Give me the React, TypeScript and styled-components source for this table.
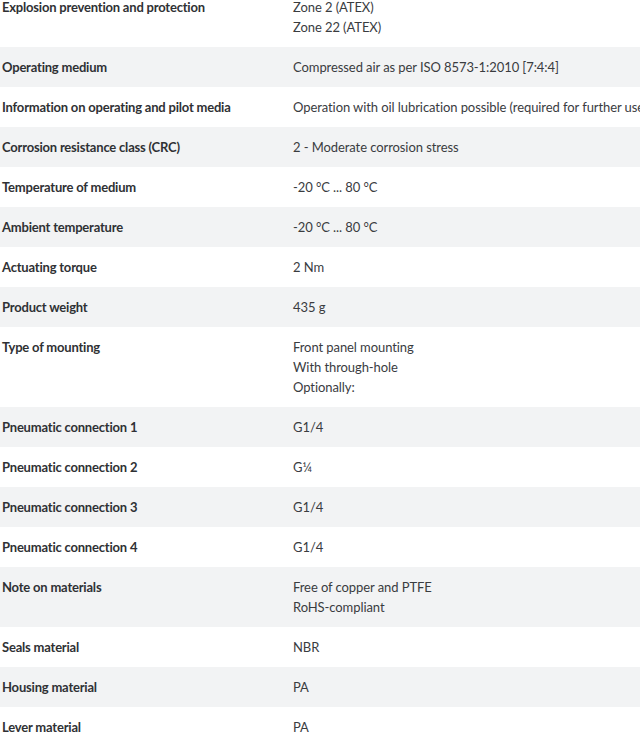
import React from "react";
import styled, { createGlobalStyle } from "styled-components";

const Global = createGlobalStyle`
  html, body { margin: 0; padding: 0; background: #ffffff; overflow: hidden; }
  body { font-family: Lato, "Open Sans", sans-serif; color: #333333; }
`;

const Page = styled.div`
  width: 640px;
  height: 733px;
  overflow: hidden;
`;

const Table = styled.div`
  margin-top: -13px;
  width: 760px;
  display: flex;
  flex-direction: column;
`;

const Row = styled.div<{ $shade: boolean }>`
  display: grid;
  grid-template-columns: 291px 1fr;
  padding: 10px 0 10px 2px;
  background: ${(p) => (p.$shade ? "#f2f3f4" : "#ffffff")};
`;

const Label = styled.div`
  font-size: 13px;
  line-height: 20px;
  font-weight: 700;
  letter-spacing: -0.2px;
  color: #2f3134;
  white-space: nowrap;
`;

const Values = styled.div`
  display: flex;
  flex-direction: column;
`;

const Value = styled.div`
  font-size: 13px;
  line-height: 20px;
  letter-spacing: -0.08px;
  color: #3a3c3f;
  white-space: nowrap;
`;

const rows: [string, string[]][] = [
  ["Explosion prevention and protection", ["Zone 2 (ATEX)", "Zone 22 (ATEX)"]],
  ["Operating medium", ["Compressed air as per ISO 8573-1:2010 [7:4:4]"]],
  ["Information on operating and pilot media", ["Operation with oil lubrication possible (required for further use)"]],
  ["Corrosion resistance class (CRC)", ["2 - Moderate corrosion stress"]],
  ["Temperature of medium", ["-20 °C ... 80 °C"]],
  ["Ambient temperature", ["-20 °C ... 80 °C"]],
  ["Actuating torque", ["2 Nm"]],
  ["Product weight", ["435 g"]],
  ["Type of mounting", ["Front panel mounting", "With through-hole", "Optionally:"]],
  ["Pneumatic connection 1", ["G1/4"]],
  ["Pneumatic connection 2", ["G¼"]],
  ["Pneumatic connection 3", ["G1/4"]],
  ["Pneumatic connection 4", ["G1/4"]],
  ["Note on materials", ["Free of copper and PTFE", "RoHS-compliant"]],
  ["Seals material", ["NBR"]],
  ["Housing material", ["PA"]],
  ["Lever material", ["PA"]],
];

export default function App() {
  return (
    <Page>
      <Global />
      <Table>
        {rows.map(([label, vals], i) => (
          <Row key={label} $shade={i % 2 === 1}>
            <Label>{label}</Label>
            <Values>
              {vals.map((v) => (
                <Value key={v}>{v}</Value>
              ))}
            </Values>
          </Row>
        ))}
      </Table>
    </Page>
  );
}
